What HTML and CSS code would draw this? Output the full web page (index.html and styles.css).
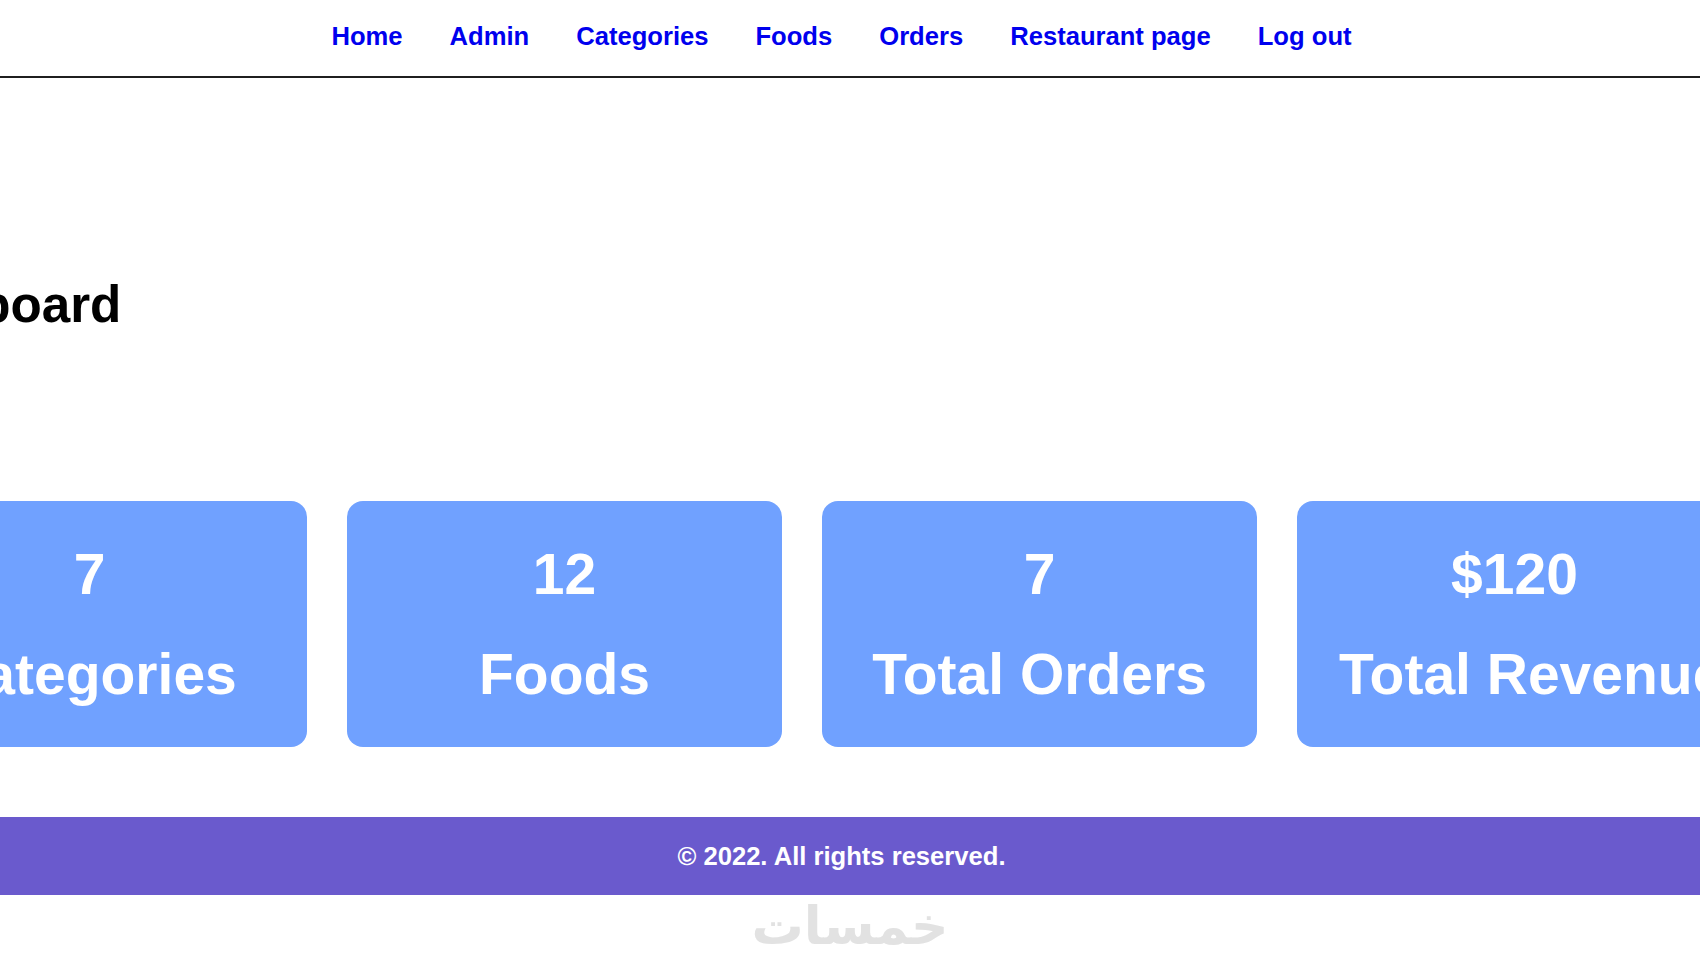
FILE: index.html
```html
<!DOCTYPE html>
<html lang="en">
<head>
<meta charset="utf-8">
<title>Dashboard</title>
<link rel="stylesheet" href="styles.css">
</head>
<body>
<header class="topbar">
  <nav class="nav">
    <a href="#" class="nav-link">Home</a>
    <a href="#" class="nav-link">Admin</a>
    <a href="#" class="nav-link">Categories</a>
    <a href="#" class="nav-link">Foods</a>
    <a href="#" class="nav-link">Orders</a>
    <a href="#" class="nav-link">Restaurant page</a>
    <a href="#" class="nav-link">Log out</a>
  </nav>
</header>
<main class="main">
  <h1 class="title">Dashboard</h1>
  <section class="cards">
    <div class="card"><div class="card-num">7</div><div class="card-label">Categories</div></div>
    <div class="card"><div class="card-num">12</div><div class="card-label">Foods</div></div>
    <div class="card"><div class="card-num">7</div><div class="card-label">Total Orders</div></div>
    <div class="card"><div class="card-num">$120</div><div class="card-label">Total Revenue</div></div>
  </section>
</main>
<footer class="footer">
  <p class="footer-text">© 2022. All rights reserved.</p>
</footer>
<div class="watermark" dir="rtl">خمسات</div>
</body>
</html>
```
FILE: styles.css
```css
html, body {
  margin: 0;
  padding: 0;
  background: #ffffff;
  overflow: hidden;
}
body {
  font-family: "Liberation Sans", Arial, sans-serif;
  position: relative;
  width: 1700px;
  height: 970px;
}
.topbar {
  border-bottom: 2px solid #1f1f1f;
  padding-right: 17px;
}
.nav {
  display: flex;
  justify-content: center;
  gap: 47px;
  padding: 21px 0 25px;
}
.nav-link {
  font-size: 25.6px;
  line-height: 30px;
  font-weight: bold;
  color: #0000ee;
  text-decoration: none;
}
.main {
  padding-top: 197px;
}
.title {
  margin: 0 0 167px -146px;
  font-size: 51.2px;
  line-height: 59px;
  font-weight: bold;
  color: #000;
  white-space: nowrap;
}
.cards {
  display: flex;
  gap: 40px;
  margin-left: -128px;
}
.card {
  flex: 0 0 435px;
  min-width: 0;
  width: 435px;
  box-sizing: border-box;
  height: 246px;
  padding: 0 42px;
  background: #70a1ff;
  border-radius: 16px;
  display: flex;
  flex-direction: column;
  justify-content: center;
  color: #ffffff;
  font-weight: bold;
  font-size: 57px;
  text-align: center;
  white-space: nowrap;
}
.card-num, .card-label {
  line-height: 100px;
  min-width: 0;
}
.footer {
  margin-top: 70px;
  height: 78px;
  background: #6a5acd;
  display: flex;
  align-items: center;
  justify-content: center;
  padding-right: 17px;
}
.footer-text {
  margin: 0;
  color: #ffffff;
  font-weight: bold;
  font-size: 25.6px;
  line-height: 30px;
}
.watermark {
  position: absolute;
  left: 50%;
  top: 896px;
  transform: translateX(-50%);
  font-family: "DejaVu Sans", sans-serif;
  font-weight: bold;
  font-size: 52px;
  line-height: 60px;
  color: #e2e2e2;
}
```
